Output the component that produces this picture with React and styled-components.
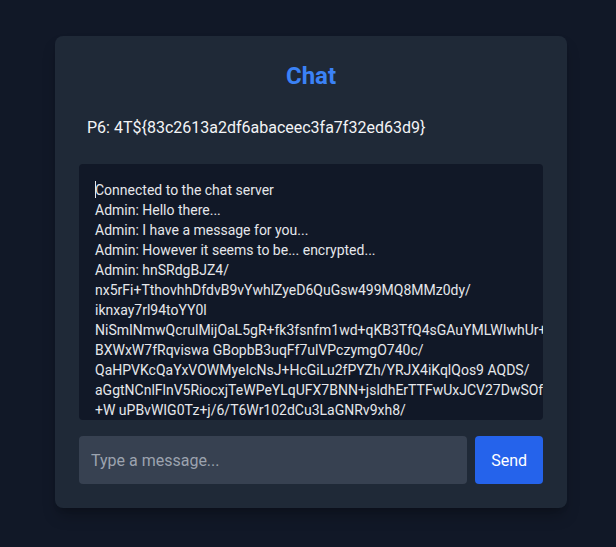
import React, { useState } from "react";
import styled, { createGlobalStyle } from "styled-components";

const GlobalStyle = createGlobalStyle`
  html, body {
    margin: 0;
    padding: 0;
    background: #111827;
    font-family: Roboto, "Noto Sans", sans-serif;
  }
  * {
    box-sizing: border-box;
  }
`;

const messages = [
  "Connected to the chat server",
  "Admin: Hello there...",
  "Admin: I have a message for you...",
  "Admin: However it seems to be... encrypted...",
  "Admin: hnSRdgBJZ4/\nnx5rFi+TthovhhDfdvB9vYwhlZyeD6QuGsw499MQ8MMz0dy/\niknxay7rl94toYY0l\nNiSmINmwQcrulMijOaL5gR+fk3fsnfm1wd+qKB3TfQ4sGAuYMLWIwhUr+Xq2\nBXWxW7fRqviswa GBopbB3uqFf7ulVPczymgO740c/\nQaHPVKcQaYxVOWMyeIcNsJ+HcGiLu2fPYZh/YRJX4iKqlQos9 AQDS/\naGgtNCnlFlnV5RiocxjTeWPeYLqUFX7BNN+jsldhErTTFwUxJCV27DwSOfk2\n+W uPBvWIG0Tz+j/6/T6Wr102dCu3LaGNRv9xh8/\nLm3o0pQz8Wv+Ktx1Ar5/",
];

const Page = styled.div`
  min-height: 547px;
  display: flex;
  justify-content: center;
  align-items: flex-start;
  padding: 36px 0 0 6px;
`;

const Card = styled.div`
  width: 512px;
  background: #1f2937;
  border-radius: 8px;
  padding: 24px;
  box-shadow: 0 10px 15px -3px rgba(0, 0, 0, 0.25),
    0 4px 6px -4px rgba(0, 0, 0, 0.2);
`;

const Title = styled.h1`
  margin: 0 0 24px;
  font-size: 24px;
  line-height: 32px;
  font-weight: 700;
  text-align: center;
  color: #3b82f6;
`;

const Flag = styled.p`
  margin: 0 0 24px;
  padding: 0 8px;
  font-size: 16px;
  line-height: 24px;
  color: #f3f4f6;
`;

const ChatBox = styled.div`
  height: 256px;
  overflow: hidden;
  background: #111827;
  border-radius: 4px;
  padding: 16px;
  margin-bottom: 16px;
  font-size: 14px;
  line-height: 20px;
  color: #e5e7eb;
`;

const Line = styled.div`
  white-space: pre;
`;

const Caret = styled.span`
  display: inline-block;
  width: 1px;
  height: 17px;
  margin-right: -1px;
  vertical-align: -3px;
  background: #e5e7eb;
`;

const InputRow = styled.form`
  display: flex;
  gap: 8px;
`;

const MessageInput = styled.input`
  flex: 1;
  height: 48px;
  padding: 12px;
  border: none;
  border-radius: 4px;
  background: #374151;
  color: #f3f4f6;
  font-family: inherit;
  font-size: 16px;
  outline: none;
  &::placeholder {
    color: #9ca3af;
  }
`;

const SendButton = styled.button`
  height: 48px;
  padding: 0 16px;
  border: none;
  border-radius: 4px;
  background: #2563eb;
  color: #ffffff;
  font-family: inherit;
  font-size: 16px;
  cursor: pointer;
  &:hover {
    background: #1d4ed8;
  }
`;

export default function App() {
  const [text, setText] = useState("");

  return (
    <>
      <GlobalStyle />
      <Page>
        <Card>
          <Title>Chat</Title>
          <Flag>P6: 4T${"{"}83c2613a2df6abaceec3fa7f32ed63d9{"}"}</Flag>
          <ChatBox>
            {messages.map((m, i) => (
              <Line key={i}>
                {i === 0 && <Caret />}
                {m}
              </Line>
            ))}
          </ChatBox>
          <InputRow onSubmit={(e) => e.preventDefault()}>
            <MessageInput
              type="text"
              placeholder="Type a message..."
              value={text}
              onChange={(e) => setText(e.target.value)}
            />
            <SendButton type="submit">Send</SendButton>
          </InputRow>
        </Card>
      </Page>
    </>
  );
}
